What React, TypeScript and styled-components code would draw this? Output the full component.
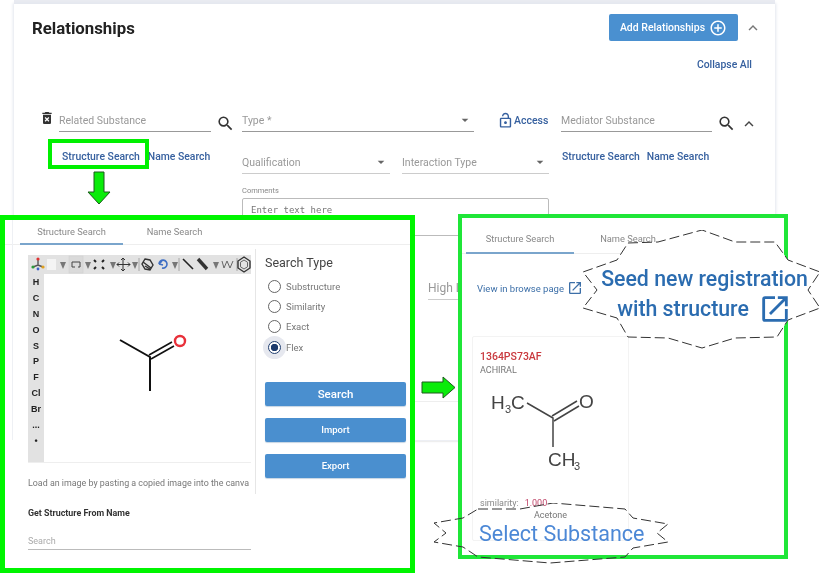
import React from 'react';
import styled, { createGlobalStyle } from 'styled-components';
import {
  MdArrowDropDown,
  MdDeleteForever,
  MdKeyboardArrowUp,
  MdOpenInNew,
  MdOutlineAddCircleOutline,
  MdOutlineLockOpen,
  MdSearch,
} from 'react-icons/md';

const GlobalStyle = createGlobalStyle`
  html, body {
    margin: 0;
    padding: 0;
    background: #fff;
    font-family: Roboto, "Liberation Sans", sans-serif;
  }
  * { box-sizing: border-box; }
`;

const Page = styled.div`
  position: relative;
  width: 822px;
  height: 574px;
  overflow: hidden;
  background: #fff;
  padding-top: 4px;
  filter: blur(0.4px);
`;

const Card = styled.section`
  width: 761px;
  height: 436px;
  margin-left: 14px;
  padding: 10px 0 0 18px;
  background: #fff;
  box-shadow: 0 0 3px 1px #e3e6ee, 0 -4px 0 #e9ebf1;
`;

const Header = styled.div`
  display: flex;
  align-items: center;
  height: 27px;
  padding-right: 13px;
`;

const Title = styled.h2`
  flex: 1;
  margin: 0;
  font-size: 16.8px;
  font-weight: 700;
  color: #222;
`;

const AddButton = styled.button`
  display: flex;
  align-items: center;
  justify-content: center;
  gap: 4px;
  width: 129px;
  height: 27px;
  border: 0;
  border-radius: 2px;
  background: #4a90d0;
  color: #fff;
  font: 500 10.5px Roboto, sans-serif;
`;

const Chevron = styled.div`
  display: flex;
  margin-left: 6px;
  color: #777;
  font-size: 18px;
`;

const Link = styled.a`
  color: #36609f;
  font-size: 10.4px;
  font-weight: 500;
  white-space: nowrap;
`;

const CollapseRow = styled.div`
  display: flex;
  justify-content: flex-end;
  padding: 17px 23px 0 0;
  height: 40px;
`;

const Form = styled.div`
  display: grid;
  grid-template-columns: 189px 307px 205px;
  column-gap: 7px;
  margin: 27px 0 0 14px;
`;

const Row = styled.div<{ $gap?: number }>`
  display: flex;
  align-items: center;
  gap: ${p => p.$gap ?? 0}px;
`;

const Field = styled.div<{ $w: number }>`
  display: flex;
  align-items: center;
  justify-content: space-between;
  width: ${p => p.$w}px;
  height: 23px;
  border-bottom: 1px solid #999;
  color: #999;
  font-size: 10.5px;
  flex: none;
  svg { color: #666; font-size: 16px; margin-right: 1px; }
`;

const LightField = styled(Field)`
  border-bottom: 1.5px solid #ccc;
`;

const Trash = styled.div`
  display: flex;
  width: 22px;
  margin-top: -6px;
  margin-left: -7px;
  color: #333;
  font-size: 16px;
`;

const LensIcon = styled.div`
  display: flex;
  margin: 6px 0 0 5px;
  color: #333;
  font-size: 19px;
`;

const LinkRow = styled.div<{ $left: number; $gap: number }>`
  display: flex;
  gap: ${p => p.$gap}px;
  margin: 17px 0 0 ${p => p.$left}px;
`;

const AccessLink = styled.div`
  display: flex;
  align-items: center;
  margin-left: 23px;
  color: #36609f;
  font-size: 10.5px;
  font-weight: 500;
  svg { font-size: 17px; }
`;

const Middle = styled.div`
  grid-row: span 2;
`;

const Small = styled.div`
  margin-top: 12px;
  color: #888;
  font-size: 7.5px;
  line-height: 10px;
`;

const CommentBox = styled.div`
  width: 307px;
  height: 38px;
  margin-top: 2px;
  padding: 6px 8px;
  border: 1px solid #bbb;
  border-radius: 2px;
  color: #777;
  font: 9px "DejaVu Sans Mono", monospace;
`;

const Limit = styled(LightField)`
  margin: 41px 0 0 186px;
  width: 120px;
  font-size: 12px;
`;

const Rule = styled.hr<{ $top: number }>`
  margin: ${p => p.$top}px 0 0 -18px;
  border: 0;
  border-top: 1px solid #eee;
`;

/* annotation panels lying over the page */
const Panel = styled.div<{ $l: number; $t: number; $w: number; $h: number; $b: number; $c: string }>`
  position: absolute;
  left: ${p => p.$l}px;
  top: ${p => p.$t}px;
  width: ${p => p.$w}px;
  height: ${p => p.$h}px;
  border: ${p => p.$b}px solid ${p => p.$c};
  background: #fff;
`;

const Tabs = styled.div<{ $pad: number; $top?: number }>`
  display: flex;
  padding: ${p => p.$top ?? 0}px 0 0 ${p => p.$pad}px;
  border-bottom: 1px solid #eee;
`;

const Tab = styled.div<{ $w: number; $h: number; $active?: boolean }>`
  width: ${p => p.$w}px;
  height: ${p => p.$h}px;
  display: flex;
  align-items: center;
  justify-content: center;
  margin-bottom: -1px;
  color: #888;
  font-size: 9.3px;
  border-bottom: 2px solid ${p => (p.$active ? '#7aa5cc' : 'transparent')};
`;

const Split = styled.div`
  display: flex;
  height: 249px;
  padding: 10px 0 0 23px;
`;

const SketchColumn = styled.div`
  width: 228px;
  border-right: 1px solid #e6e6e6;
  margin-top: -6px;
  padding-top: 6px;
`;

const Sketcher = styled.div`
  position: relative;
  width: 223px;
  height: 208px;
  border-bottom: 1px solid #eee;
`;

const SketchTools = styled.svg`
  display: block;
  background: #e2e2e2;
`;

const AtomBar = styled.div`
  position: absolute;
  left: 0;
  top: 19px;
  bottom: 0;
  width: 16px;
  display: flex;
  flex-direction: column;
  align-items: center;
  padding-top: 1px;
  background: #e2e2e2;
  color: #222;
  font: 700 9px "Liberation Sans", sans-serif;
`;

const Atom = styled.span`
  height: 15.9px;
  line-height: 15px;
`;

const SketchMol = styled.svg`
  position: absolute;
  left: 16px;
  top: 19px;
`;

const Hint = styled.div`
  width: 223px;
  margin-top: 15px;
  white-space: nowrap;
  color: #777;
  font-size: 8.9px;
`;

const Options = styled.div`
  padding-left: 9px;
`;

const OptionsTitle = styled.div`
  font-size: 12.5px;
  line-height: 15px;
  color: #444;
  margin-bottom: 6px;
`;

const RadioRow = styled.label`
  display: flex;
  align-items: center;
  height: 20.4px;
  gap: 5px;
  padding-left: 3px;
  color: #777;
  font-size: 9.5px;
`;

const Radio = styled.span<{ $on?: boolean }>`
  position: relative;
  width: 13px;
  height: 13px;
  border-radius: 50%;
  border: 1px solid ${p => (p.$on ? '#1d3b6d' : '#666')};
  box-shadow: ${p => (p.$on ? '0 0 0 5px #e6e8ef' : 'none')};
  background: ${p => (p.$on ? 'radial-gradient(circle, #1d3b6d 3.4px, #fff 4px)' : '#fff')};
`;

const ActionButton = styled.button<{ $big?: boolean; $top: number }>`
  display: block;
  width: 141px;
  height: 24px;
  margin-top: ${p => p.$top}px;
  border: 0;
  border-radius: 2px;
  background: #4a8fcf;
  box-shadow: 0 1px 1px #c5d4e3;
  color: #fff;
  font: 500 ${p => (p.$big ? 11.5 : 9.5)}px Roboto, sans-serif;
`;

const FromName = styled.div`
  margin: 14px 0 0 23px;
  width: 223px;
`;

const FromNameTitle = styled.div`
  color: #333;
  font-size: 8.9px;
  font-weight: 700;
`;

const FromNameInput = styled.div`
  margin-top: 18px;
  height: 14px;
  border-bottom: 1px solid #bbb;
  color: #aaa;
  font-size: 9px;
`;

const CardEdge = styled.div`
  position: absolute;
  left: 7px;
  top: 0;
  width: 1px;
  height: 220px;
  background: #eef0f4;
`;

const BrowseRow = styled.div`
  display: flex;
  align-items: center;
  gap: 3px;
  margin: 26px 0 0 15px;
  color: #3c6fa8;
  font-size: 9.5px;
  svg { font-size: 16px; }
`;

const ResultCard = styled.div`
  width: 157px;
  height: 205px;
  margin: 40px 0 0 10px;
  padding: 14px 0 0 7px;
  border: 1px solid #f3f3f3;
  border-radius: 2px;
`;

const Code = styled.div`
  color: #c9383d;
  font-size: 10.5px;
  font-weight: 500;
  line-height: 12px;
`;

const Stereo = styled.div`
  margin-top: 1px;
  color: #777;
  font-size: 9px;
  line-height: 13px;
`;

const ResultMol = styled.svg`
  display: block;
  margin: -1px 0 0 -7px;
`;

const Similarity = styled.div`
  display: flex;
  gap: 6px;
  margin-top: 7px;
  color: #888;
  font-size: 9px;
  span { color: #c0476a; }
`;

const Burst = styled.div<{ $l: number; $t: number; $w: number; $h: number; $pt?: number; $pl?: number }>`
  position: absolute;
  left: ${p => p.$l}px;
  top: ${p => p.$t}px;
  width: ${p => p.$w}px;
  height: ${p => p.$h}px;
  padding-top: ${p => p.$pt ?? 0}px;
  padding-left: ${p => p.$pl ?? 0}px;
  display: flex;
  flex-direction: column;
  align-items: center;
  justify-content: center;
  svg.burst { position: absolute; left: 0; top: 0; }
`;

const BurstLine = styled.div`
  position: relative;
  display: flex;
  align-items: center;
  gap: 9px;
  height: 30px;
  color: #2b6cb0;
  font-size: 21.3px;
  font-weight: 500;
  white-space: nowrap;
`;

const SelectText = styled.div`
  position: absolute;
  left: 46px;
  top: 18px;
  color: #4c88d6;
  font-size: 21.5px;
  white-space: nowrap;
`;

const Acetone = styled.div`
  position: absolute;
  left: 101px;
  top: 7px;
  color: #777;
  font-size: 9px;
`;

const Highlight = styled.div`
  position: absolute;
  left: 48px;
  top: 139px;
  width: 101px;
  height: 30px;
  border: 4px solid #00f000;
`;

const Arrow = styled.svg<{ $l: number; $t: number }>`
  position: absolute;
  left: ${p => p.$l}px;
  top: ${p => p.$t}px;
`;

const ATOMS = ['H', 'C', 'N', 'O', 'S', 'P', 'F', 'Cl', 'Br', '...', '•'];
const SEARCH_TYPES = ['Substructure', 'Similarity', 'Exact', 'Flex'];
const CARETS = [35, 60, 85, 107, 147, 188];

const ToolStrip = () => (
  <SketchTools width="223" height="19" viewBox="0 0 223 19">
    <g strokeWidth="1.4" fill="none">
      <path d="M10 4v6M5 12l5-2 5 2" stroke="#555" />
      <circle cx="10" cy="4" r="1.6" fill="#d33" stroke="none" />
      <circle cx="5" cy="12" r="1.6" fill="#2a9a3a" stroke="none" />
      <circle cx="15" cy="12" r="1.6" fill="#e0a020" stroke="none" />
      <circle cx="10" cy="14" r="1.4" fill="#3a62c8" stroke="none" />
    </g>
    <rect x="19" y="4" width="9" height="11" fill="#f4f4f4" />
    <rect x="41" y="1" width="14" height="17" fill="#dadada" stroke="#cfcfcf" strokeWidth="0.6" />
    <path d="M44 7h8v5h-2M44 7v5h3" fill="none" stroke="#444" strokeWidth="1" />
    <g fill="#777">
      {CARETS.map(x => (
        <path key={x} d={`M${x - 3} 7h6l-3 7z`} />
      ))}
    </g>
    <path d="M66 5l2 2M76 5l-2 2M66 14l2-2M76 14l-2-2" stroke="#222" strokeWidth="2" />
    <path d="M95 3v13M89 9.500h13M95 3l-2 2M95 3l2 2M95 16l-2-2M95 16l2-2M89 9.500l2-2M89 9.500l2 2M102 9.500l-2-2M102 9.500l-2 2" fill="none" stroke="#333" strokeWidth="1" />
    <path d="M111 3v13M151 3v13M209 3v13" stroke="#999" strokeWidth="0.8" />
    <path d="M117 4l5 1 3 5-3 5-5-1-3-5zM115 7l8 6M117 11l5 3" fill="none" stroke="#333" strokeWidth="1.4" />
    <path d="M131 9a4 4 0 1 1 3 4M131 9l3-3M131 9l4 1" fill="none" stroke="#3f6fc4" strokeWidth="1.6" />
    <path d="M155 4l10 10" stroke="#222" strokeWidth="1.6" />
    <path d="M170 4l9 10" stroke="#333" strokeWidth="3.4" />
    <path d="M194 6l2 7 3-7 3 7 3-7" fill="none" stroke="#666" strokeWidth="1" />
    <path d="M216 2l6 4v7l-6 4-6-4V6z" fill="none" stroke="#333" strokeWidth="1.4" />
    <path d="M216 5l3.500 2.200v4.600L216 14l-3.500-2.200V7.200z" fill="none" stroke="#666" strokeWidth="1" />
  </SketchTools>
);

const FIRST_BURST =
  '45,13 75,12 119,0 152,12 192,12 205,30 237,42 225,60 237,78 205,90 194,107 152,108 119,118 85,108 45,107 34,88 0,78 14,60 0,42 34,30';
const SECOND_BURST =
  '45,6 87,6 120,0 192,6 200,15 235,21 224,30 235,39 200,45 192,54 117,60 45,54 30,44 1,39 13,30 1,20 30,15';

const App: React.FC = () => {
  return (
    <Page>
      <GlobalStyle />
      <Card>
        <Header>
          <Title>Relationships</Title>
          <AddButton>
            Add Relationships <MdOutlineAddCircleOutline size={18} />
          </AddButton>
          <Chevron>
            <MdKeyboardArrowUp />
          </Chevron>
        </Header>
        <CollapseRow>
          <Link>Collapse All</Link>
        </CollapseRow>
        <Form>
          <Row>
            <Trash>
              <MdDeleteForever />
            </Trash>
            <Field $w={152}>Related Substance</Field>
            <LensIcon>
              <MdSearch />
            </LensIcon>
          </Row>
          <Row>
            <Field $w={232}>
              Type *
              <MdArrowDropDown />
            </Field>
            <AccessLink>
              <MdOutlineLockOpen />
              Access
            </AccessLink>
          </Row>
          <Row>
            <Field $w={151} style={{ marginLeft: 5 }}>
              Mediator Substance
            </Field>
            <LensIcon>
              <MdSearch />
            </LensIcon>
            <Chevron style={{ color: '#444', marginLeft: 4, marginTop: 6 }}>
              <MdKeyboardArrowUp />
            </Chevron>
          </Row>
          <LinkRow $left={16} $gap={8}>
            <Link>Structure Search</Link>
            <Link>Name Search</Link>
          </LinkRow>
          <Middle>
            <Row $gap={12} style={{ marginTop: 18 }}>
              <LightField $w={148}>
                Qualification
                <MdArrowDropDown />
              </LightField>
              <LightField $w={147}>
                Interaction Type
                <MdArrowDropDown />
              </LightField>
            </Row>
            <Small>Comments</Small>
            <CommentBox>Enter text here</CommentBox>
            <Limit $w={120}>High Limit</Limit>
          </Middle>
          <LinkRow $left={6} $gap={7}>
            <Link>Structure Search</Link>
            <Link>Name Search</Link>
          </LinkRow>
        </Form>
        <Rule $top={101} />
        <Rule $top={39} />
      </Card>

      <Highlight />
      <Arrow $l={87} $t={171} width="24" height="34" viewBox="0 0 24 34">
        <path d="M7 1h10v20h6L12 33 1 21h6z" fill="#0aec0a" stroke="#1c5a1c" strokeWidth="1" />
      </Arrow>
      <Arrow $l={421} $t={376} width="35" height="23" viewBox="0 0 35 23">
        <path d="M1 6h21V1l12 10.500L22 22v-5H1z" fill="#0aec0a" stroke="#1c5a1c" strokeWidth="1" />
      </Arrow>

      <Panel $l={0} $t={215} $w={415} $h={358} $b={5} $c="#00f500">
        <CardEdge />
        <Tabs $pad={15}>
          <Tab $w={103} $h={25} $active>
            Structure Search
          </Tab>
          <Tab $w={103} $h={25}>
            Name Search
          </Tab>
        </Tabs>
        <Split>
          <SketchColumn>
            <Sketcher>
              <ToolStrip />
              <AtomBar>
                {ATOMS.map(a => (
                  <Atom key={a}>{a}</Atom>
                ))}
              </AtomBar>
              <SketchMol width="207" height="189" viewBox="0 0 207 189">
                <path d="M76 66l30 17v34" fill="none" stroke="#111" strokeWidth="2" />
                <path d="M105 81l23-13M107 85l23-13" fill="none" stroke="#111" strokeWidth="1.6" />
                <circle cx="136" cy="67" r="5" fill="none" stroke="#e8303a" strokeWidth="2.4" />
              </SketchMol>
            </Sketcher>
            <Hint>Load an image by pasting a copied image into the canva</Hint>
          </SketchColumn>
          <Options>
            <OptionsTitle>Search Type</OptionsTitle>
            {SEARCH_TYPES.map(t => (
              <RadioRow key={t}>
                <Radio $on={t === 'Flex'} />
                {t}
              </RadioRow>
            ))}
            <ActionButton $big $top={24}>
              Search
            </ActionButton>
            <ActionButton $top={12}>Import</ActionButton>
            <ActionButton $top={12}>Export</ActionButton>
          </Options>
        </Split>
        <FromName>
          <FromNameTitle>Get Structure From Name</FromNameTitle>
          <FromNameInput>Search</FromNameInput>
        </FromName>
      </Panel>

      <Panel $l={458} $t={214} $w={330} $h={345} $b={4} $c="#1fe638">
        <Tabs $pad={4} $top={6}>
          <Tab $w={108} $h={30} $active>
            Structure Search
          </Tab>
          <Tab $w={108} $h={30}>
            Name Search
          </Tab>
        </Tabs>
        <BrowseRow>
          View in browse page
          <MdOpenInNew />
        </BrowseRow>
        <ResultCard>
          <Code>1364PS73AF</Code>
          <Stereo>ACHIRAL</Stereo>
          <ResultMol width="155" height="115" viewBox="0 0 155 115">
            <g fill="#444" fontFamily="Liberation Sans, sans-serif" fontSize="19">
              <text x="18" y="33">
                H
              </text>
              <text x="32" y="37" fontSize="11">
                3
              </text>
              <text x="38" y="33">
                C
              </text>
              <text x="106" y="32">
                O
              </text>
              <text x="75" y="90">
                CH
              </text>
              <text x="101" y="94" fontSize="11">
                3
              </text>
            </g>
            <path d="M54 27l26 15v29" fill="none" stroke="#444" strokeWidth="1.5" />
            <path d="M79 40l25-15M81 45l25-15" fill="none" stroke="#444" strokeWidth="1.5" />
          </ResultMol>
          <Similarity>
            similarity: <span>1.000</span>
          </Similarity>
        </ResultCard>
      </Panel>

      <Burst $l={583} $t={230} $w={239} $h={119} $pt={8} $pl={4}>
        <svg className="burst" width="239" height="119" viewBox="0 0 239 119">
          <polygon points={FIRST_BURST} fill="#fff" stroke="#333" strokeWidth="1" strokeDasharray="10 4" />
        </svg>
        <BurstLine>Seed new registration</BurstLine>
        <BurstLine>
          with structure <MdOpenInNew size={34} />
        </BurstLine>
      </Burst>

      <Burst $l={433} $t={503} $w={236} $h={61}>
        <svg className="burst" width="236" height="61" viewBox="0 0 236 61">
          <polygon points={SECOND_BURST} fill="none" stroke="#333" strokeWidth="1" strokeDasharray="10 4" />
        </svg>
        <Acetone>Acetone</Acetone>
        <SelectText>Select Substance</SelectText>
      </Burst>
    </Page>
  );
};

export default App;
